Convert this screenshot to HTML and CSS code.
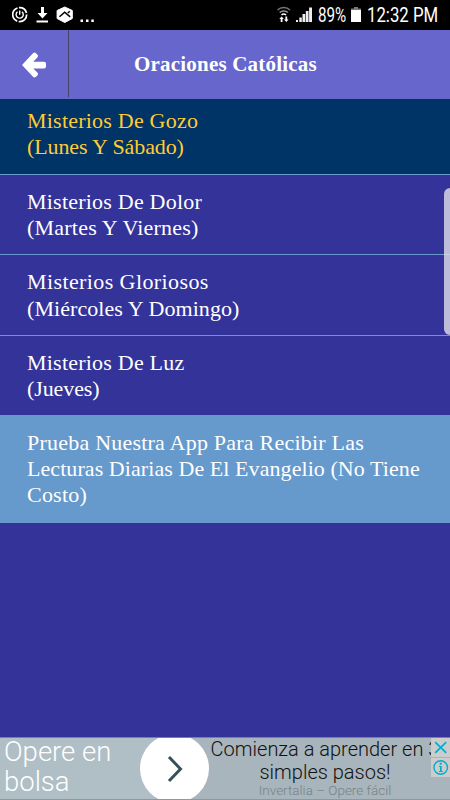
FILE: index.html
```html
<!DOCTYPE html>
<html lang="es">
<head>
    <meta charset="UTF-8">
    <meta name="viewport" content="width=device-width, initial-scale=1.0">
    <title>Oraciones Católicas</title>
    <link rel="stylesheet" href="styles.css">
</head>
<body>

<div class="status-bar">
    <div class="status-left">
        <svg width="82" height="30" viewBox="0 0 82 30">
            <g fill="none" stroke="#fff">
                <circle cx="7.7" cy="14.6" r="7" stroke-width="1.7" stroke-dasharray="12 1.5 17 1.5 10 2"/>
                <path d="M5.500 11.700a3.600 3.600 0 1 0 4.400 0M7.700 10.500v4.300" stroke-width="1.400"/>
            </g>
            <path d="M29 7h3v6h3.500l-5 5.500-5-5.500H29zM24.500 20.500h11.500v2H24.500z" fill="#fff"/>
            <path d="M52.800 7l7.500 3.500v8l-7.500 4-7.700-4v-8z" fill="#fff" stroke="#fff" stroke-width="1" stroke-linejoin="round"/>
            <path d="M47.500 16.800l5.200-4.600 5.500 4.600M55.800 13l2-1.800" fill="none" stroke="#000" stroke-width="1.500"/>
            <path d="M68.500 19.500h2.500v2.400h-2.500zM74 19.500h2.500v2.400H74zM79.300 19.500h2.500v2.400h-2.500z" fill="#fff"/>
        </svg>
    </div>
    <div class="status-right">
        <svg class="wifi" width="14" height="30" viewBox="0 0 14 30">
            <g fill="none" stroke="#777" stroke-width="1.500">
                <path d="M.5 10a9 9 0 0 1 12.500 0"/>
                <path d="M2.700 12.500a6 6 0 0 1 8.200 0" stroke="#999"/>
                <path d="M4.500 15a3.500 3.500 0 0 1 4.600 0" stroke="#fff"/>
            </g>
            <path d="M4.600 16.500l2.300 2.500H5.500v3H3.700v-3H2.300zM9.300 22l-2.300-2.500h1.400v-3h1.800v3h1.400z" fill="#fff"/>
        </svg>
        <svg class="signal" width="16" height="30" viewBox="0 0 16 30">
            <path d="M0 20h2v2H0zM3.300 17.500h2.500V22H3.300zM6.500 14h2.700v8H6.500zM9.800 11h2.700v11H9.800zM13.100 7.500H16V22h-2.900z" fill="#eee"/>
        </svg>
        <span class="percent">89%</span>
        <svg class="battery" width="10" height="30" viewBox="0 0 10 30">
            <path d="M3 7h4v1.500h3V10H0V8.500h3z" fill="#777"/>
            <path d="M0 10h10v12H0z" fill="#fff"/>
        </svg>
        <span class="clock">12:32 PM</span>
    </div>
</div>

<div class="header">
    <a class="back">
        <svg width="24" height="26" viewBox="0 0 24 26">
            <path d="M0 13L11 1.300q1.500-1.500 3 0l1.300 1.300q1.500 1.500 0 3L11.300 9.800H22q2 0 2 2v2.700q0 2-2 2H11.300l4 4q1.500 1.500 0 3L14 24.800q-1.500 1.500-3 0z" fill="#fff"/>
        </svg>
    </a>
    <h1>Oraciones Católicas</h1>
</div>

<div class="list">
    <a class="item active">Misterios De Gozo<br><span class="tight">(Lunes Y Sábado)</span></a>
    <a class="item">Misterios De Dolor<br>(Martes Y Viernes)</a>
    <a class="item"><span class="wide">Misterios Gloriosos</span><br><span class="snug">(Miércoles Y Domingo)</span></a>
    <a class="item">Misterios De Luz<br><span class="tight">(Jueves)</span></a>
    <a class="item promo">Prueba Nuestra App Para Recibir Las<br><span class="snug">Lecturas Diarias De El Evangelio (No Tiene</span><br>Costo)</a>
    <div class="scroll-handle"></div>
</div>

<div class="ad">
    <div class="ad-title">Opere en<br>bolsa</div>
    <div class="ad-button">
        <svg width="16" height="28" viewBox="0 0 16 28">
            <path d="M2 2l11.500 12L2 26" fill="none" stroke="#37505c" stroke-width="3"/>
        </svg>
    </div>
    <div class="ad-text">
        <div class="ad-line">Comienza a aprender en 3</div>
        <div class="ad-line">simples pasos!</div>
        <div class="ad-brand">Invertalia – Opere fácil</div>
    </div>
    <div class="ad-controls">
        <svg width="19" height="19" viewBox="0 0 19 19">
            <path d="M4.200 4.200l11 10.600M15.200 4.200l-11 10.600" stroke="#00aecd" stroke-width="1.700"/>
        </svg>
        <svg width="19" height="19" viewBox="0 0 19 19">
            <circle cx="9.700" cy="9.500" r="6.800" fill="none" stroke="#00aecd" stroke-width="1.400"/>
            <path d="M8.700 4.800h2v2h-2zM8 8h2.700v5h1v1H8v-1h1V9H8z" fill="#00aecd"/>
        </svg>
    </div>
</div>

</body>
</html>
```

FILE: styles.css
```css
* {
    box-sizing: border-box;
}
body {
    margin: 0;
    height: 800px;
    display: flex;
    flex-direction: column;
    overflow: hidden;
    background-color: #333399;
    color: #fff;
    font-family: "Liberation Serif", serif;
}
svg {
    display: block;
}
.status-bar {
    height: 30px;
    flex: none;
    display: flex;
    justify-content: space-between;
    padding: 0 13px 0 12px;
    background-color: #000;
    font-family: Roboto, sans-serif;
    font-size: 19.5px;
    line-height: 31px;
}
.status-right {
    display: flex;
}
.signal {
    margin: 0 6px 0 5px;
}
.percent {
    width: 30px;
    transform: scaleX(0.78);
    transform-origin: left;
}
.battery {
    margin: 0 6px 0 3px;
}
.clock {
    width: 70px;
    white-space: nowrap;
    transform: scaleX(0.86);
    transform-origin: left;
}
.header {
    height: 69px;
    flex: none;
    display: flex;
    background-color: #6666cc;
}
.back {
    width: 69px;
    height: 67px;
    display: flex;
    align-items: center;
    padding: 2px 0 0 22px;
    border-right: 1px solid #444466;
}
h1 {
    margin: 0 0 0 65px;
    font-size: 21px;
    line-height: 68px;
    letter-spacing: 0.2px;
}
.list {
    position: relative;
    flex: 1;
}
.item {
    display: block;
    height: 80.3px;
    padding: 14px 0 0 27px;
    border-bottom: 1px solid #6699cc;
    font-size: 22px;
    line-height: 26.3px;
    letter-spacing: 0.22px;
    white-space: nowrap;
}
.wide {
    letter-spacing: 0.4px;
}
.snug {
    letter-spacing: 0.07px;
}
.tight {
    letter-spacing: -0.1px;
}
.active {
    height: 76px;
    padding-top: 9px;
    background-color: #003366;
    color: #ffcc33;
}
.promo {
    height: 107px;
    background-color: #6699cc;
}
.scroll-handle {
    position: absolute;
    top: 89px;
    right: 0;
    width: 6px;
    height: 147px;
    border-radius: 6px 0 0 6px;
    background-color: rgba(225, 222, 235, 0.8);
}
.ad {
    position: relative;
    height: 63px;
    flex: none;
    display: flex;
    overflow: hidden;
    background: linear-gradient(to right, #b0bec5 175px, #a8b5bc 175px);
    border-top: 1px solid #7780a0;
    border-bottom: 1px solid #8c999f;
    font-family: Roboto, sans-serif;
    font-weight: 300;
}
.ad-title {
    width: 140px;
    padding-left: 4px;
    font-size: 27.5px;
    line-height: 30px;
    margin-top: -1px;
}
.ad-button {
    width: 69px;
    height: 69px;
    margin-top: -4px;
    flex: none;
    display: flex;
    align-items: center;
    justify-content: center;
    border-radius: 50%;
    background-color: #fff;
}
.ad-text {
    width: 230px;
    margin-left: 1px;
    text-align: center;
    color: #111;
    white-space: nowrap;
}
.ad-line {
    font-size: 20px;
    line-height: 22.5px;
}
.ad-brand {
    font-size: 13.5px;
    line-height: 15px;
    color: #75838a;
}
.ad-controls {
    position: absolute;
    top: 0;
    right: 0;
    display: flex;
    flex-direction: column;
    gap: 1px;
}
.ad-controls svg {
    background-color: #ccc;
}
```
